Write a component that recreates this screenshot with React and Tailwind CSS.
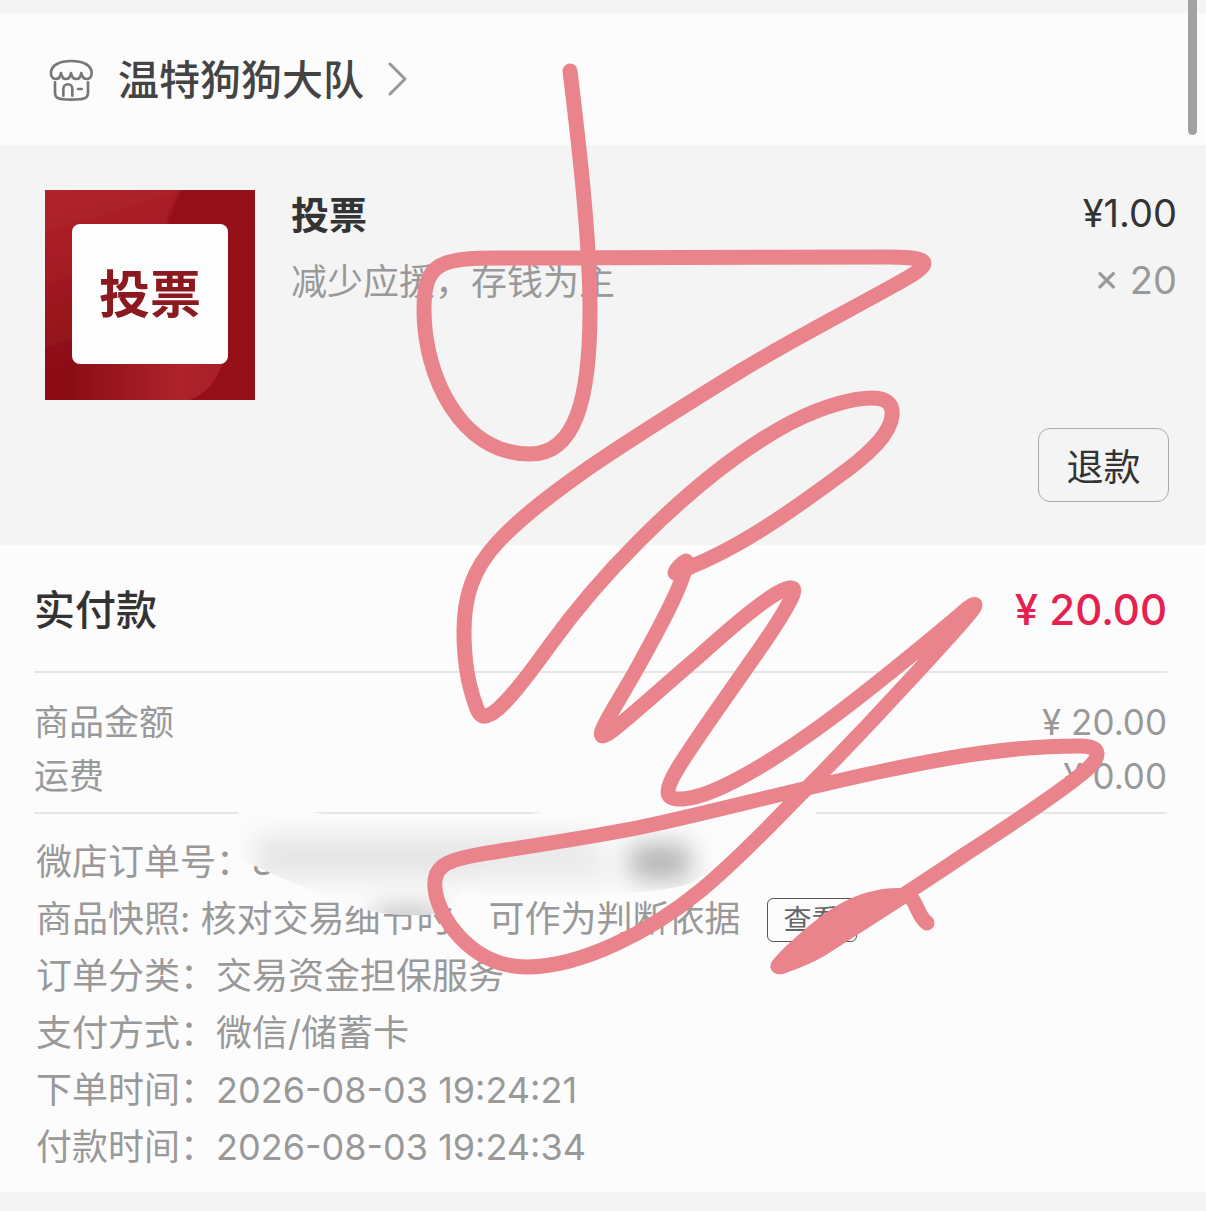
const PEN = "#ea848c";

function ShopIcon() {
  return (
    <svg
      viewBox="147 174 132 129"
      className="w-11 h-[43px] text-[#777]"
      fill="none"
      stroke="currentColor"
      strokeWidth="8"
      strokeLinecap="round"
      strokeLinejoin="round"
    >
      <path d="M183 216 C181 228 175 234 167 234 C158 234 153 226 153 216 C153 192 180 180 214 180 C248 180 275 192 275 216 C275 226 270 234 261 234 C252 234 246 228 244 216 C242 228 236 234 229 234 C221 234 215 228 213 216 C211 228 206 234 198 234 C190 234 185 228 183 216" />
      <path d="M165 244 V276 C165 292 175 296 214 296 C253 296 264 292 264 276 V244" />
      <path d="M190 284 V264 C190 245 217 245 217 264 V284" />
      <path d="M234 264 H245" />
    </svg>
  );
}

function Thumb() {
  return (
    <div className="relative w-[210px] h-[210px] shrink-0 flex items-center justify-center overflow-hidden bg-[#950f19]">
      <svg viewBox="0 0 210 210" className="absolute inset-0 w-full h-full">
        <defs>
          <linearGradient id="sheenTop" x1="0" y1="0" x2="0.2" y2="1">
            <stop offset="0" stopColor="#b4262e" />
            <stop offset="0.4" stopColor="#a51b24" />
            <stop offset="0.8" stopColor="#8d0f18" />
          </linearGradient>
          <linearGradient id="sheenBottom" x1="0" y1="0" x2="1" y2="0">
            <stop offset="0" stopColor="#8d0f18" />
            <stop offset="0.7" stopColor="#ae222b" />
            <stop offset="1" stopColor="#a81e27" />
          </linearGradient>
          <filter id="sheenBlur">
            <feGaussianBlur stdDeviation="2" />
          </filter>
        </defs>
        <path d="M-10 -10 H140 C128 12 120 36 112 70 L60 220 H-10 Z" fill="url(#sheenTop)" filter="url(#sheenBlur)" />
        <path d="M30 150 H182 C178 185 165 205 138 212 H30 Z" fill="url(#sheenBottom)" />
      </svg>
      <div className="relative w-[156px] h-[140px] mb-[2px] rounded-lg bg-[#fdfdfd] flex items-center justify-center text-[51px] leading-none font-bold text-[#8c1820]">
        投票
      </div>
    </div>
  );
}

function Row({ label, children }) {
  return (
    <div className="flex items-center h-[57px] whitespace-pre">
      <dt>{label}</dt>
      <dd className="flex items-center">{children}</dd>
    </div>
  );
}

// blurred order number and the hand-drawn scribble on top of the page
function Marks() {
  return (
    <svg
      viewBox="0 0 1206 1211"
      className="absolute top-0 left-0 w-full pointer-events-none"
      fill="none"
    >
      <defs>
        <filter id="soft" x="-30%" y="-80%" width="160%" height="260%">
          <feGaussianBlur stdDeviation="13" />
        </filter>
        <clipPath id="smudge">
          <path d="M240 808 C275 806 300 810 330 815 L525 815 C545 812 560 808 580 806 H816 V826 L745 848 L690 884 C650 895 560 897 500 895 L462 892 C450 905 440 915 425 915 C395 916 370 913 345 903 C310 890 285 880 262 869 C245 861 232 855 229 845 Z" />
        </clipPath>
      </defs>
      <g clipPath="url(#smudge)">
        <rect x="220" y="800" width="600" height="120" fill="#fcfcfc" />
        <g filter="url(#soft)">
          <rect x="255" y="834" width="340" height="46" fill="#e6e6e6" />
          <rect x="480" y="850" width="130" height="34" fill="#ececec" />
          <rect x="375" y="908" width="65" height="20" fill="#b8b8b8" />
          <rect x="630" y="844" width="60" height="36" fill="#b4b4b4" />
        </g>
      </g>
      <g stroke={PEN} strokeWidth="15" strokeLinecap="round" strokeLinejoin="round">
        <path d="M570 71 C579 145 590 240 590 310 C590 400 575 454 530 454 C460 454 424 375 424 310 C424 262 440 258 500 258 L890 257 C940 257 927 267 900 282 C850 310 795 338 742 370 C690 402 640 433 590 467 C550 495 520 518 497 543 C472 570 464 598 464 632 C464 665 470 690 476 706 C480 719 486 719 498 709 C512 697 530 673 550 645 C576 609 607 573 640 540 C675 505 730 455 790 423 C825 405 855 398 872 398 C890 398 893 407 892 416 C890 435 868 454 847 470 C810 497 750 543 690 567" />
        <path d="M690 567 L675 573 C676 569 682 563 686 561 Z" fill={PEN} />
        <path d="M686 562 C686 580 657 632 640 663 C632 678 617 702 606 722 C598 737 600 740 613 730 C635 713 665 685 697 658 C730 628 770 594 786 589 C795 586 796 590 790 601 C780 620 765 642 747 667 C725 699 695 740 678 768 C664 791 664 800 683 799 C715 797 775 760 833 717 C865 693 925 645 968 608 C977 601 977 605 970 613 C958 628 930 658 907 683 C875 718 830 765 800 795 C773 822 740 858 700 891 C650 932 580 967 527 967 C470 967 437 915 435 888 C433 868 445 861 471 856 C520 847 590 838 646 826 C700 815 810 786 883 771 C950 757 1010 746 1080 746 C1102 746 1102 757 1084 772 C1060 792 1015 822 967 853 C945 868 925 881 905 894" />
        <path d="M907 894 C917 900 917 916 927 923" />
      </g>
      <path
        d="M912 889 C880 884 845 896 815 921 C800 933 784 947 773 960 C766 968 774 978 786 973 C802 967 814 962 826 955 L910 901 Z"
        fill={PEN}
      />
    </svg>
  );
}

export default function App() {
  return (
    <div className="relative min-h-screen bg-[#f4f4f4] pt-[13px] pb-[19px] overflow-hidden text-[36px] text-[#999] font-['Inter','Noto_Sans_CJK_SC',sans-serif]">
      <header className="h-[132px] bg-[#fcfcfc] pt-[2px] pl-[49px] flex items-center">
        <a href="#shop" className="flex items-center">
          <ShopIcon />
          <span className="ml-[25px] text-[41px] leading-[60px] font-medium text-[#444]">温特狗狗大队</span>
          <svg
            viewBox="0 0 20 36"
            className="ml-6 w-5 h-9"
            fill="none"
            stroke="#999"
            strokeWidth="3"
            strokeLinecap="round"
            strokeLinejoin="round"
          >
            <path d="M2 2 L17 17 L2 32" />
          </svg>
        </a>
      </header>

      <section className="h-[400px] pt-[45px] pl-[45px] pr-[29px]">
        <div className="flex">
          <Thumb />
          <div className="ml-9 flex-1">
            <h2 className="text-[38px] leading-[50px] font-bold text-[#333]">投票</h2>
            <p className="mt-4 leading-[52px]">减少应援，存钱为主</p>
          </div>
          <div className="text-right text-[38px]">
            <div className="leading-[46px] text-[#333]">¥1.00</div>
            <div className="mt-4 leading-[56px]">× 20</div>
          </div>
        </div>
        <div className="flex justify-end mt-7 mr-2">
          <button className="w-[131px] h-[74px] pt-1 rounded-xl border border-[#aaa] text-[37px] leading-none text-[#333]">
            退款
          </button>
        </div>
      </section>

      <section className="bg-[#fcfcfc] pl-[34px] pr-[39px] pb-4">
        <div className="h-[128px] pt-1 flex items-center justify-between border-b-2 border-[#e6e6e6]">
          <h3 className="text-[41px] leading-[60px] font-medium text-[#333]">实付款</h3>
          <span className="text-[42px] leading-[60px] font-medium text-[#e5224f]">¥ 20.00</span>
        </div>
        <dl className="pt-[22px] pb-[9px] border-b-2 border-[#e6e6e6] text-[35px] leading-[54px]">
          <div className="flex justify-between">
            <dt>商品金额</dt>
            <dd>¥ 20.00</dd>
          </div>
          <div className="flex justify-between">
            <dt>运费</dt>
            <dd>¥ 0.00</dd>
          </div>
        </dl>

        <dl className="pt-5 pl-[2px] leading-[57px]">
          <Row label="微店订单号：">8</Row>
          <Row label="商品快照: ">
            核对交易细节时　可作为判断依据
            <button className="ml-[26px] w-[90px] h-11 rounded-md border border-[#555] text-[28px] leading-none text-[#666]">
              查看
            </button>
          </Row>
          <Row label="订单分类：">交易资金担保服务</Row>
          <Row label="支付方式：">微信/储蓄卡</Row>
          <Row label="下单时间：">2026-08-03 19:24:21</Row>
          <Row label="付款时间：">2026-08-03 19:24:34</Row>
        </dl>
      </section>

      <Marks />
      <div className="absolute top-0 right-[9px] w-[9px] h-[135px] rounded-b-full bg-[#a2a2a2]" />
    </div>
  );
}
